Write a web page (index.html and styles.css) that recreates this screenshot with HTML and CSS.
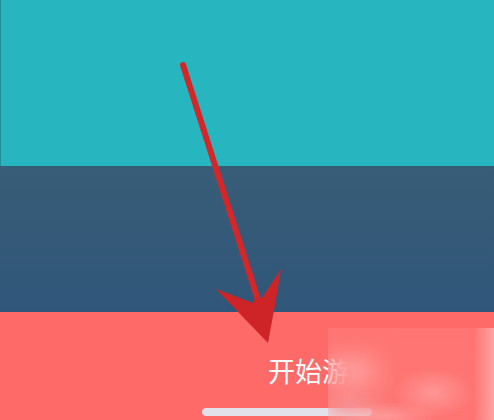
FILE: index.html
```html
<!DOCTYPE html>
<html lang="zh">
<head>
<meta charset="utf-8">
<link rel="stylesheet" href="styles.css">
</head>
<body>
<div class="screen">
  <div class="band band-top"></div>
  <div class="band band-mid"></div>
  <div class="band band-bottom">
    <div class="start">开始游戏</div>
    <div class="home-bar"></div>
  </div>
  <svg class="arrow" width="494" height="420" viewBox="0 0 494 420">
    <line x1="183" y1="65" x2="258" y2="300" stroke="#d4272a" stroke-width="6" stroke-linecap="round"/>
    <polygon points="268,343 216,289 253,303 256,296 262,298 281,269 275,305" fill="#cf2427"/>
  </svg>
  <div class="watermark"></div>
</div>
</body>
</html>
```
FILE: styles.css
```css
html, body {
  margin: 0;
  padding: 0;
}
body {
  width: 494px;
  height: 420px;
  overflow: hidden;
  font-family: "Noto Sans CJK SC", "Noto Sans", sans-serif;
}
.screen {
  position: relative;
  width: 494px;
  height: 420px;
  display: flex;
  flex-direction: column;
}
.band-top {
  height: 166px;
  background: #27b5bf;
  border-left: 1px solid #1f8f99;
  box-sizing: border-box;
}
.band-mid {
  height: 146px;
  background: linear-gradient(#385d77, #30567a);
}
.band-bottom {
  flex: 1;
  background: #fe6a68;
  display: flex;
  flex-direction: column;
  padding: 45px 0 0 268px;
  box-sizing: border-box;
}
.start {
  color: #fff;
  font-size: 27px;
  line-height: 27px;
  white-space: nowrap;
}
.home-bar {
  margin: 24px 0 0 -66px;
  width: 170px;
  height: 8px;
  border-radius: 4px;
  background: #e4e0ea;
}
.arrow {
  position: absolute;
  left: 0;
  top: 0;
}
.watermark {
  position: absolute;
  left: 328px;
  top: 328px;
  width: 166px;
  height: 92px;
  backdrop-filter: blur(13px);
  background:
    radial-gradient(ellipse 40px 25px at 105px 65px, rgba(255,225,225,0.3), transparent),
    radial-gradient(ellipse 50px 14px at 60px 88px, rgba(255,230,230,0.3), transparent),
    linear-gradient(90deg, transparent 88%, rgba(255,235,235,0.4)),
    rgba(255,255,255,0.08);
}
```
